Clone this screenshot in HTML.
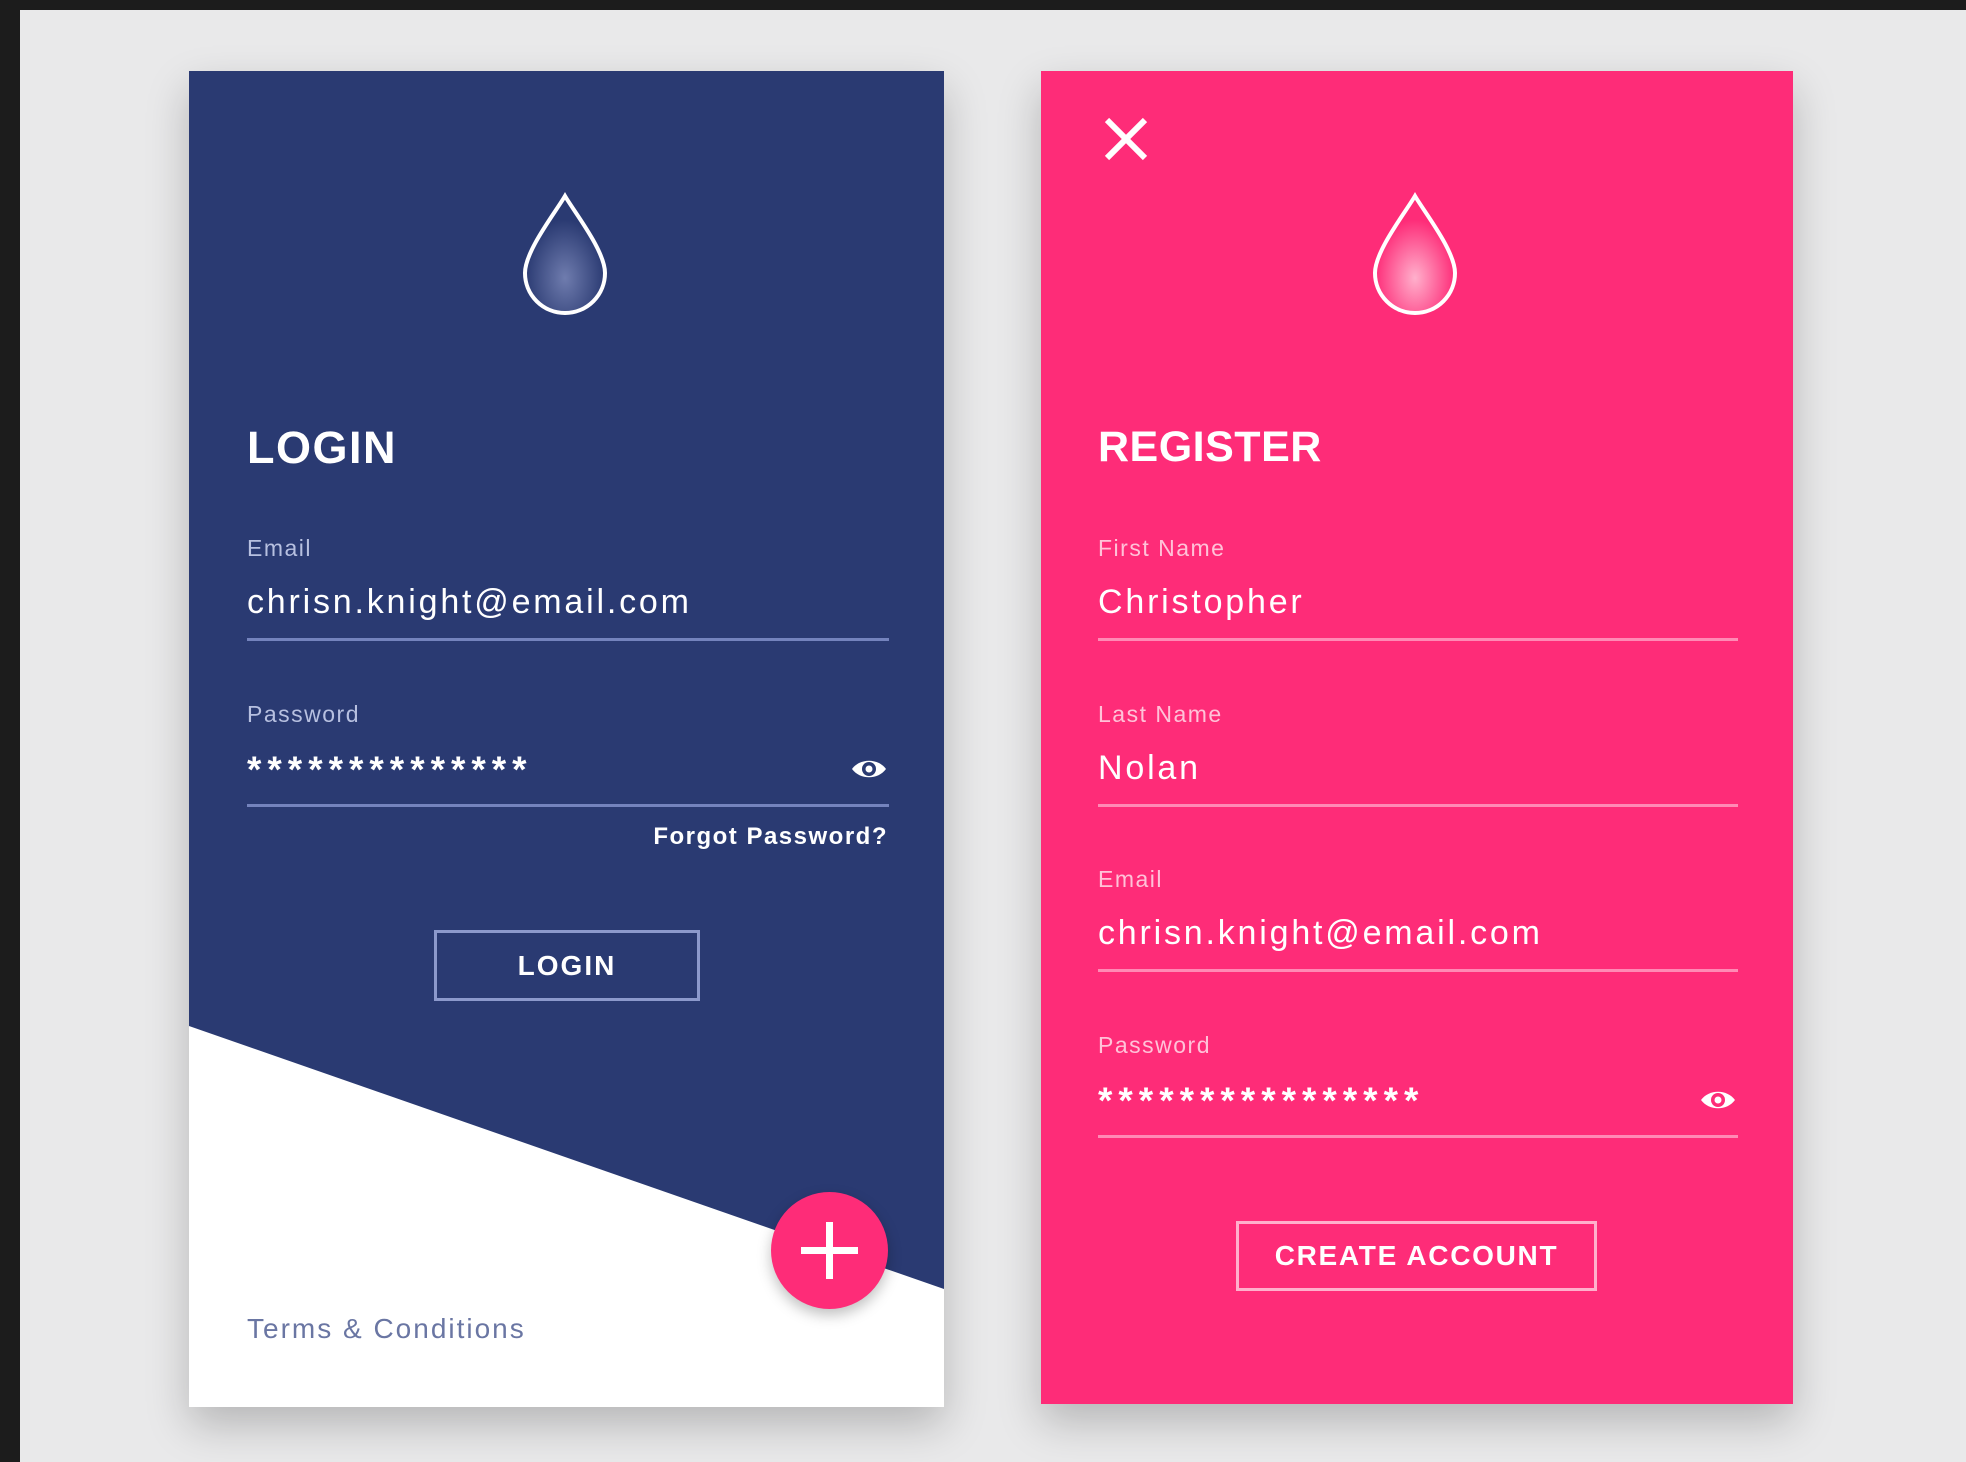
<!DOCTYPE html>
<html><head><meta charset="utf-8"><style>
*{margin:0;padding:0;box-sizing:border-box}
body{width:1966px;height:1462px;background:#e9e9ea;position:relative;overflow:hidden;font-family:"Liberation Sans",sans-serif}
.topbar{position:absolute;left:0;top:0;width:1966px;height:10px;background:#1c1c1c}
.leftbar{position:absolute;left:0;top:0;width:20px;height:1462px;background:#1c1c1c}
.card{position:absolute;box-shadow:0 18px 40px rgba(0,0,0,0.22);overflow:hidden}
.abs{position:absolute;white-space:nowrap}
.title{font-size:45px;font-weight:bold;letter-spacing:1.5px;color:#fff}
.lbl{font-size:23px;letter-spacing:1.5px}
.val{font-size:34px;letter-spacing:2.8px;color:#fff}
.stars{font-size:37px;font-weight:bold;letter-spacing:6px;color:#fff}
.line{position:absolute;height:3px}
.btn{position:absolute;border:3px solid;display:flex;align-items:center;justify-content:center;font-size:28px;font-weight:bold;letter-spacing:2px}
</style></head><body>
<div class="topbar"></div><div class="leftbar"></div>

<div class="card" style="left:189px;top:71px;width:755px;height:1336px;background:#2a3a72">
  <svg class="abs" style="left:0;top:0" width="755" height="1336"><polygon points="0,955 755,1218 755,1336 0,1336" fill="#fff"/></svg>
  <svg class="abs" style="left:330px;top:120px" width="92" height="126" viewBox="0 0 92 126">
    <defs><radialGradient id="g1" cx="0.5" cy="0.7" r="0.5"><stop offset="0" stop-color="#6f7cae"/><stop offset="1" stop-color="#2a3a72"/></radialGradient></defs>
    <path d="M46 5 C36 22 6 60 6 82 A40 40 0 0 0 86 82 C86 60 56 22 46 5 Z" fill="url(#g1)" stroke="#fff" stroke-width="4"/>
  </svg>
  <div class="abs title" style="left:58px;top:351px">LOGIN</div>
  <div class="abs lbl" style="left:58px;top:464px;color:#b7c0e0">Email</div>
  <div class="abs val" style="left:58px;top:512px">chrisn.knight@email.com</div>
  <div class="line" style="left:58px;top:567px;width:642px;background:#7483bd"></div>
  <div class="abs lbl" style="left:58px;top:630px;color:#b7c0e0">Password</div>
  <div class="abs stars" style="left:58px;top:678px">**************</div>
  <svg class="abs" style="left:661px;top:685px" width="38" height="26" viewBox="0 0 38 26"><path d="M2 13 C10 2 28 2 36 13 C28 24 10 24 2 13 Z" fill="#fff"/><circle cx="19" cy="13" r="7" fill="#2a3a72"/><circle cx="19" cy="13" r="3.5" fill="#fff"/></svg>
  <div class="line" style="left:58px;top:733px;width:642px;background:#7483bd"></div>
  <div class="abs" style="right:56px;top:752px;font-size:24px;font-weight:bold;letter-spacing:1.5px;color:#fff">Forgot Password?</div>
  <div class="btn" style="left:245px;top:859px;width:266px;height:71px;border-color:#8c99cc;color:#fff">LOGIN</div>
  <div class="abs" style="left:58px;top:1242px;font-size:28px;letter-spacing:2px;color:#6a76a3">Terms &amp; Conditions</div>
  <div class="abs" style="left:582px;top:1121px;width:117px;height:117px;border-radius:50%;background:#fe2c78;box-shadow:0 6px 14px rgba(0,0,0,0.25)"></div>
  <div class="abs" style="left:612px;top:1176px;width:57px;height:7px;background:#fff"></div>
  <div class="abs" style="left:637px;top:1151px;width:7px;height:57px;background:#fff"></div>
</div>

<div class="card" style="left:1041px;top:71px;width:752px;height:1333px;background:#fe2c78">
  <svg class="abs" style="left:62px;top:45px" width="46" height="46" viewBox="0 0 46 46"><path d="M4 4 L42 42 M42 4 L4 42" stroke="#fff" stroke-width="6"/></svg>
  <svg class="abs" style="left:328px;top:120px" width="92" height="126" viewBox="0 0 92 126">
    <defs><radialGradient id="g2" cx="0.5" cy="0.7" r="0.5"><stop offset="0" stop-color="#ffb0cc"/><stop offset="1" stop-color="#fe2c78"/></radialGradient></defs>
    <path d="M46 5 C36 22 6 60 6 82 A40 40 0 0 0 86 82 C86 60 56 22 46 5 Z" fill="url(#g2)" stroke="#fff" stroke-width="4"/>
  </svg>
  <div class="abs title" style="left:57px;top:352px;font-size:43px;letter-spacing:0.5px">REGISTER</div>
  <div class="abs lbl" style="left:57px;top:464px;color:#ffc2d8">First Name</div>
  <div class="abs val" style="left:57px;top:512px">Christopher</div>
  <div class="line" style="left:57px;top:567px;width:640px;background:#ff8ab5"></div>
  <div class="abs lbl" style="left:57px;top:630px;color:#ffc2d8">Last Name</div>
  <div class="abs val" style="left:57px;top:678px">Nolan</div>
  <div class="line" style="left:57px;top:733px;width:640px;background:#ff8ab5"></div>
  <div class="abs lbl" style="left:57px;top:795px;color:#ffc2d8">Email</div>
  <div class="abs val" style="left:57px;top:843px">chrisn.knight@email.com</div>
  <div class="line" style="left:57px;top:898px;width:640px;background:#ff8ab5"></div>
  <div class="abs lbl" style="left:57px;top:961px;color:#ffc2d8">Password</div>
  <div class="abs stars" style="left:57px;top:1009px">****************</div>
  <svg class="abs" style="left:658px;top:1016px" width="38" height="26" viewBox="0 0 38 26"><path d="M2 13 C10 2 28 2 36 13 C28 24 10 24 2 13 Z" fill="#fff"/><circle cx="19" cy="13" r="7" fill="#fe2c78"/><circle cx="19" cy="13" r="3.5" fill="#fff"/></svg>
  <div class="line" style="left:57px;top:1064px;width:640px;background:#ff8ab5"></div>
  <div class="btn" style="left:195px;top:1150px;width:361px;height:70px;border-color:#ffb0cc;color:#fff;letter-spacing:1.7px">CREATE ACCOUNT</div>
</div>
</body></html>
